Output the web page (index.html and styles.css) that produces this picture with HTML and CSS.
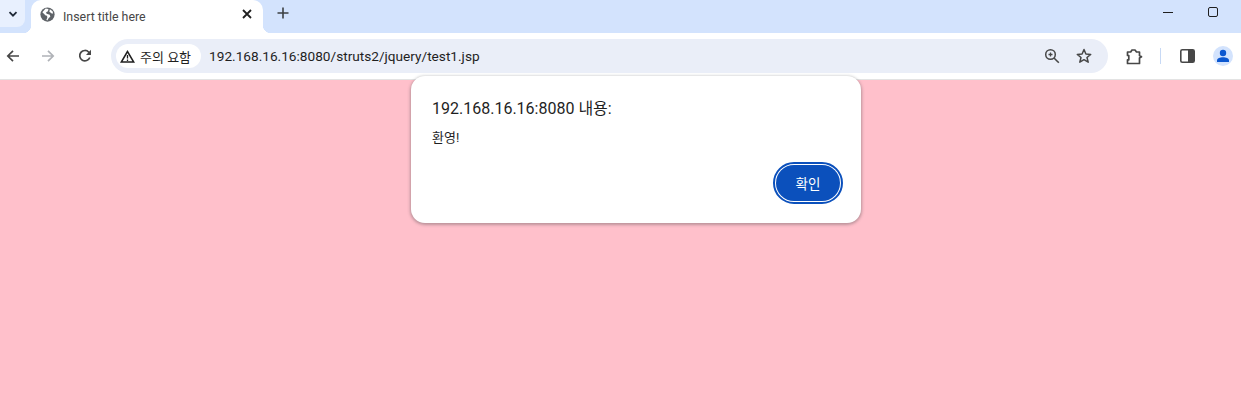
FILE: index.html
```html
<!DOCTYPE html>
<html lang="ko">
  <head>
    <meta charset="UTF-8" />
    <meta name="viewport" content="width=device-width, initial-scale=1.0" />
    <title>Insert title here</title>
    <link rel="stylesheet" href="styles.css">
  </head>
  <body>
    <div class="tabstrip">
      <div class="tab-search">
        <svg width="12" height="12" viewBox="0 0 12 12"><path d="M2.5 4.2 6 7.7l3.5-3.5" fill="none" stroke="#1f2937" stroke-width="1.8"/></svg>
      </div>
      <div class="tab">
        <svg class="favicon" width="15" height="15" viewBox="0 0 16 16">
          <circle cx="8" cy="8" r="7.6" fill="#5f6368"/>
          <path d="M2.5 5.5 6 9l1.5.3.3 2.2-1 2 1 .8 1.5-2.6 1.7-1.4-.6-2L7 7.200 6.500 5.500 8.500 4.500 9 2 6 1.500Z M10.500 2.500 10 5l2.500 1.800 1.500.2-.6-2.500Z" fill="#fff"/>
        </svg>
        <span class="tab-title">Insert title here</span>
        <svg class="tab-close" width="10" height="10" viewBox="0 0 10 10"><path d="M1 1l8 8M9 1 1 9" stroke="#1f1f1f" stroke-width="1.800"/></svg>
      </div>
      <svg class="new-tab" width="12" height="12" viewBox="0 0 12 12"><path d="M6 .5v11M.5 6h11" stroke="#3c4043" stroke-width="1.600"/></svg>
      <div class="window-btns">
        <span class="win-min"></span>
        <span class="win-max"></span>
      </div>
    </div>

    <div class="toolbar">
      <svg class="nav-back" width="14" height="14" viewBox="0 0 14 14"><path d="M13 7H2M7 1.800 1.800 7 7 12.200" fill="none" stroke="#474747" stroke-width="1.700"/></svg>
      <svg class="nav-forward" width="14" height="14" viewBox="0 0 14 14"><path d="M1 7h11M7 1.800 12.200 7 7 12.200" fill="none" stroke="#b0b3b8" stroke-width="1.700"/></svg>
      <svg class="nav-reload" width="14" height="14" viewBox="0 0 14 14"><path d="M11.800 8.500A5.200 5.200 0 1 1 10.800 3.200L12.500 5" fill="none" stroke="#474747" stroke-width="1.700"/><path d="M13 .8V6H8Z" fill="#474747"/></svg>

      <div class="omnibox">
        <div class="chip">
          <svg width="15" height="13" viewBox="0 0 15 13"><path d="M7.500 1.500 1.300 12h12.400Z" fill="none" stroke="#1f1f1f" stroke-width="1.500"/><path d="M7.500 5v3.500M7.500 9.500V11" stroke="#1f1f1f" stroke-width="1.300"/></svg>
          <span>주의 요함</span>
        </div>
        <span class="url">192.168.16.16:8080/struts2/jquery/test1.jsp</span>
        <svg class="omni-zoom" width="16" height="16" viewBox="0 0 16 16"><circle cx="6.500" cy="6.500" r="4.800" fill="none" stroke="#474747" stroke-width="1.500"/><path d="m10 10 4.800 4.800" stroke="#474747" stroke-width="1.600"/><path d="M4.500 6.500h4M6.500 4.500v4" stroke="#474747" stroke-width="1.300"/></svg>
        <svg class="omni-star" width="16" height="16" viewBox="0 0 16 16"><path d="M8 1.500 9.900 6l4.800.4-3.700 3.100 1.200 4.700L8 11.700l-4.200 2.500L5 9.500 1.300 6.400 6.100 6Z" fill="none" stroke="#474747" stroke-width="1.500" stroke-linejoin="round"/></svg>
      </div>

      <svg class="ext" width="17" height="17" viewBox="0 0 17 17"><path d="M1.500 4h3.200L6 2h3l1.500 2h3v3.500l2 1.200-2 1.300V15.500h-12v-3.700h1.300V7.500H1.500Z" fill="none" stroke="#474747" stroke-width="1.700" stroke-linejoin="round"/></svg>
      <span class="divider"></span>
      <svg class="side" width="15" height="14" viewBox="0 0 15 14"><rect x=".8" y=".8" width="13.400" height="12.400" rx="1.500" fill="none" stroke="#474747" stroke-width="1.600"/><rect x="8" y="1" width="6" height="12" fill="#474747"/></svg>
      <div class="avatar">
        <svg width="14" height="14" viewBox="0 0 14 14"><circle cx="7" cy="4" r="3.200" fill="#0b57d0"/><path d="M1 13v-1.500C1 9.500 4 8.300 7 8.300s6 1.200 6 3.200V13Z" fill="#0b57d0"/></svg>
      </div>
    </div>

    <div class="page"></div>

    <div class="alert">
      <p class="alert-title">192.168.16.16:8080 내용:</p>
      <p class="alert-msg">환영!</p>
      <div class="alert-actions">
        <button class="ok-btn">확인</button>
      </div>
    </div>
  </body>
</html>
```

FILE: styles.css
```css
html, body {
  height: 100%;
}
body {
  margin: 0;
  display: flex;
  flex-direction: column;
  overflow: hidden;
  background-color: #ffc0cb;
  font-family: Roboto, "Noto Sans CJK KR", sans-serif;
}
.tabstrip {
  display: flex;
  align-items: flex-start;
  height: 33px;
  background-color: #d3e3fd;
  flex-shrink: 0;
}
.tab-search {
  width: 25px;
  height: 27px;
  background-color: #e8f0fe;
  border-radius: 0 0 8px 0;
  display: flex;
  align-items: center;
  justify-content: center;
}
.tab {
  position: relative;
  display: flex;
  align-items: center;
  width: 232px;
  height: 33px;
  margin-left: 6px;
  background: white;
  border-radius: 10px 10px 0 0;
}
.tab::before,
.tab::after {
  content: "";
  position: absolute;
  bottom: 0;
  width: 8px;
  height: 8px;
}
.tab::before {
  left: -8px;
  background: radial-gradient(circle at 0 0, #d3e3fd 8px, white 8.500px);
}
.tab::after {
  right: -8px;
  background: radial-gradient(circle at 100% 0, #d3e3fd 8px, white 8.500px);
}
.favicon {
  margin: -5px 0 0 9px;
}
.tab-title {
  margin-left: 8px;
  font-size: 12.400px;
  color: #474747;
  flex: 1;
}
.tab-close {
  margin: -5px 11px 0 0;
}
.new-tab {
  margin: 7px 0 0 14px;
}
.window-btns {
  margin-left: auto;
  display: flex;
  align-items: center;
  gap: 35px;
  height: 24px;
  padding-right: 23px;
}
.win-min {
  width: 10px;
  height: 1px;
  background: #1f1f1f;
}
.win-max {
  width: 8px;
  height: 8px;
  border: 1px solid #1f1f1f;
  border-radius: 2px;
}
.toolbar {
  display: flex;
  align-items: center;
  height: 46px;
  background: white;
  border-bottom: 1px solid #e3e3e3;
  flex-shrink: 0;
}
.nav-back {
  margin-left: 6px;
}
.nav-forward {
  margin-left: 21px;
}
.nav-reload {
  margin-left: 23px;
}
.omnibox {
  display: flex;
  align-items: center;
  width: 997px;
  height: 34px;
  margin-left: 19px;
  background-color: #eaeef8;
  border-radius: 17px;
}
.chip {
  display: flex;
  align-items: center;
  gap: 5px;
  height: 24px;
  margin-left: 5px;
  padding: 0 10px 0 4px;
  background: white;
  border-radius: 12px;
  font-size: 13px;
  color: #1f1f1f;
  white-space: nowrap;
}
.url {
  margin-left: 8px;
  font-size: 13.650px;
  color: #1f1f1f;
  flex: 1;
}
.omni-zoom {
  margin-right: 16px;
}
.omni-star {
  margin-right: 16px;
}
.ext {
  margin-left: 18px;
}
.divider {
  width: 1px;
  height: 16px;
  margin-left: 17px;
  background-color: #c7d9f5;
}
.side {
  margin-left: 19px;
}
.avatar {
  width: 20px;
  height: 20px;
  margin-left: 18px;
  border-radius: 50%;
  background-color: #d3e3fd;
  display: flex;
  align-items: center;
  justify-content: center;
}
.page {
  flex: 1;
}
.alert {
  position: absolute;
  top: 76px;
  left: 411px;
  width: 450px;
  height: 147px;
  box-sizing: border-box;
  padding: 22px 18px 0 21px;
  background: white;
  border-radius: 14px;
  box-shadow: 0 1px 3px 1px rgba(60, 64, 67, 0.35);
}
.alert-title {
  margin: 0;
  font-size: 16px;
  line-height: 22px;
  color: #1f1f1f;
}
.alert-msg {
  margin: 9px 0 0;
  font-size: 13px;
  line-height: 18px;
  color: #1f1f1f;
}
.alert-actions {
  display: flex;
  justify-content: flex-end;
  margin-top: 15px;
}
.ok-btn {
  width: 64px;
  height: 36px;
  margin: 3px;
  border: none;
  border-radius: 18px;
  background-color: #0b50bc;
  color: white;
  font-family: inherit;
  font-size: 13.500px;
  outline: 2px solid #0b50bc;
  outline-offset: 1px;
}
```
